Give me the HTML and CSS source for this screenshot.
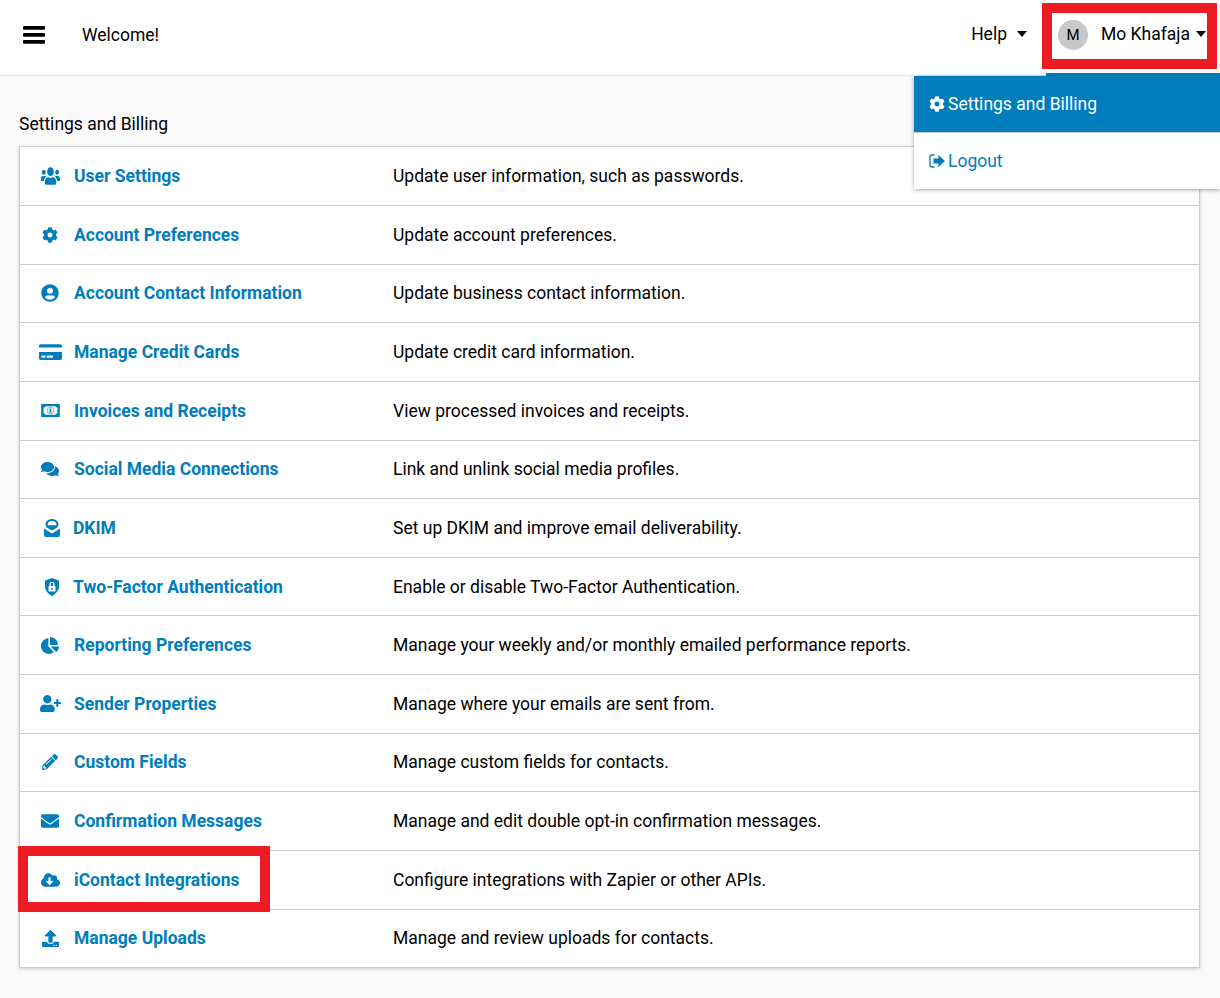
FILE: index.html
```html
<!DOCTYPE html>
<html lang="en">
<head>
    <meta charset="UTF-8">
    <title>Settings and Billing</title>
    <link rel="stylesheet" href="styles.css">
</head>
<body>
    <header class="topbar">
        <svg class="burger" viewBox="0 0 22 18"><rect y="0" width="22" height="3.8" rx="1"/><rect y="7" width="22" height="3.8" rx="1"/><rect y="14" width="22" height="3.8" rx="1"/></svg>
        <span class="welcome">Welcome!</span>
        <div class="help">Help <span class="caret"></span></div>
        <div class="user-menu">
            <span class="avatar">M</span>
            <span class="user-name">Mo Khafaja</span>
            <span class="caret caret-user"></span>
        </div>
    </header>

    <div class="dropdown">
        <a class="dropdown-item active">
            <svg class="drop-icon" viewBox="0 0 512 512"><path d="M487.4 315.7l-42.6-24.6c4.3-23.2 4.3-47 0-70.2l42.6-24.6c4.9-2.8 7.1-8.6 5.5-14-11.1-35.6-30-67.8-54.7-94.6-3.8-4.1-10-5.1-14.8-2.3L380.8 110c-17.9-15.4-38.5-27.3-60.8-35.1V25.8c0-5.6-3.9-10.5-9.4-11.7-36.7-8.2-74.3-7.8-109.2 0-5.5 1.2-9.4 6.1-9.4 11.7V75c-22.2 7.9-42.8 19.8-60.8 35.1L88.7 85.5c-4.9-2.8-11-1.9-14.8 2.3-24.7 26.7-43.6 58.9-54.7 94.6-1.7 5.4.6 11.2 5.5 14L67.3 221c-4.3 23.2-4.3 47 0 70.2l-42.6 24.6c-4.9 2.8-7.1 8.6-5.5 14 11.1 35.6 30 67.8 54.7 94.6 3.8 4.1 10 5.1 14.8 2.3l42.6-24.6c17.9 15.4 38.5 27.3 60.8 35.1v49.2c0 5.6 3.9 10.5 9.4 11.7 36.7 8.2 74.3 7.8 109.2 0 5.5-1.2 9.4-6.1 9.4-11.7v-49.2c22.2-7.9 42.8-19.8 60.8-35.1l42.6 24.6c4.9 2.8 11 1.9 14.8-2.3 24.7-26.7 43.6-58.9 54.7-94.6 1.5-5.5-.7-11.3-5.6-14.1zM256 336c-44.1 0-80-35.9-80-80s35.9-80 80-80 80 35.9 80 80-35.9 80-80 80z"/></svg>
            Settings and Billing
        </a>
        <a class="dropdown-item">
            <svg class="drop-icon" viewBox="0 0 16 14"><path d="M5.5 1H3a2 2 0 0 0-2 2v8a2 2 0 0 0 2 2h2.500" fill="none" stroke="currentColor" stroke-width="1.300"/><path d="M4.500 4.600h4.800V1L16 7l-6.700 6V9.400H4.500z"/></svg>
            Logout
        </a>
    </div>

    <main class="content">
        <h1 class="page-title">Settings and Billing</h1>
        <div class="settings-card">
            <div class="row">
                <svg class="icon users" viewBox="0 0 640 512" preserveAspectRatio="none"><path d="M96 224c35.3 0 64-28.7 64-64s-28.7-64-64-64-64 28.7-64 64 28.7 64 64 64zm448 0c35.3 0 64-28.7 64-64s-28.7-64-64-64-64 28.7-64 64 28.7 64 64 64zm32 32h-64c-17.6 0-33.5 7.1-45.1 18.6 40.3 22.1 68.9 62 75.1 109.4h66c17.7 0 32-14.3 32-32v-32c0-35.3-28.7-64-64-64zm-256 0c61.9 0 112-50.1 112-112S381.9 32 320 32 208 82.1 208 144s50.1 112 112 112zm76.8 32h-8.3c-20.8 10-43.9 16-68.5 16s-47.6-6-68.5-16h-8.3C179.6 288 128 339.6 128 403.2V432c0 26.5 21.5 48 48 48h288c26.5 0 48-21.5 48-48v-28.8c0-63.6-51.600-115.200-115.200-115.200zm-223.700-13.400C161.500 263.100 145.600 256 128 256H64c-35.300 0-64 28.700-64 64v32c0 17.700 14.300 32 32 32h65.900c6.300-47.400 34.900-87.300 75.200-109.400z"/></svg>
                <a class="row-name">User Settings</a>
                <span class="row-desc">Update user information, such as passwords.</span>
            </div>
            <div class="row">
                <svg class="icon gear" viewBox="0 0 512 512"><path d="M487.4 315.7l-42.6-24.6c4.3-23.2 4.3-47 0-70.2l42.6-24.6c4.9-2.8 7.1-8.6 5.5-14-11.1-35.6-30-67.8-54.7-94.6-3.8-4.1-10-5.1-14.8-2.3L380.8 110c-17.9-15.4-38.5-27.3-60.8-35.1V25.8c0-5.6-3.9-10.5-9.4-11.7-36.7-8.2-74.3-7.8-109.2 0-5.5 1.2-9.4 6.1-9.4 11.7V75c-22.2 7.9-42.8 19.8-60.8 35.1L88.7 85.5c-4.9-2.8-11-1.9-14.8 2.3-24.7 26.7-43.6 58.9-54.7 94.6-1.7 5.4.6 11.2 5.5 14L67.3 221c-4.3 23.2-4.3 47 0 70.2l-42.6 24.6c-4.9 2.8-7.1 8.6-5.5 14 11.1 35.6 30 67.8 54.7 94.6 3.8 4.1 10 5.1 14.8 2.3l42.6-24.6c17.9 15.4 38.5 27.3 60.8 35.1v49.2c0 5.6 3.9 10.5 9.4 11.7 36.7 8.2 74.3 7.8 109.2 0 5.5-1.2 9.4-6.1 9.4-11.7v-49.2c22.2-7.9 42.8-19.8 60.8-35.1l42.6 24.6c4.9 2.8 11 1.9 14.8-2.3 24.7-26.7 43.6-58.9 54.7-94.6 1.5-5.5-.7-11.3-5.6-14.1zM256 336c-44.1 0-80-35.9-80-80s35.9-80 80-80 80 35.9 80 80-35.9 80-80 80z"/></svg>
                <a class="row-name">Account Preferences</a>
                <span class="row-desc">Update account preferences.</span>
            </div>
            <div class="row">
                <svg class="icon circle-user" viewBox="0 0 496 512"><path d="M248 8C111 8 0 119 0 256s111 248 248 248 248-111 248-248S385 8 248 8zm0 96c48.600 0 88 39.400 88 88s-39.400 88-88 88-88-39.400-88-88 39.400-88 88-88zm0 344c-58.700 0-111.300-26.600-146.500-68.200 18.800-35.400 55.600-59.800 98.500-59.800 2.400 0 4.800.4 7.100 1.100 13 4.200 26.600 6.900 40.900 6.900 14.300 0 28-2.700 40.900-6.900 2.300-.7 4.700-1.100 7.100-1.100 42.900 0 79.700 24.400 98.500 59.800C359.300 421.400 306.700 448 248 448z"/></svg>
                <a class="row-name">Account Contact Information</a>
                <span class="row-desc">Update business contact information.</span>
            </div>
            <div class="row">
                <svg class="icon card" viewBox="0 0 576 512" preserveAspectRatio="none"><path d="M0 432c0 26.500 21.500 48 48 48h480c26.500 0 48-21.500 48-48V256H0v176zm192-68c0-6.600 5.400-12 12-12h136c6.600 0 12 5.400 12 12v40c0 6.600-5.400 12-12 12H204c-6.600 0-12-5.400-12-12v-40zm-128 0c0-6.600 5.400-12 12-12h72c6.600 0 12 5.400 12 12v40c0 6.600-5.400 12-12 12H76c-6.600 0-12-5.400-12-12v-40zM576 80v48H0V80c0-26.500 21.500-48 48-48h480c26.500 0 48 21.500 48 48z"/></svg>
                <a class="row-name">Manage Credit Cards</a>
                <span class="row-desc">Update credit card information.</span>
            </div>
            <div class="row">
                <svg class="icon money" viewBox="0 0 20 14"><path fill-rule="evenodd" d="M0 0h20v14H0zM2.500 4v6A2.500 2.500 0 0 1 4.500 11.500h11a2.500 2.500 0 0 1 2-1.500V4a2.500 2.500 0 0 1-2-1.500h-11A2.500 2.500 0 0 1 2.500 4z"/><circle cx="10" cy="7" r="4" fill="#7fbedd"/><circle cx="10" cy="7" r="2.900" fill="#fff"/><path d="M9.400 4.800h1.400v3.400h.7v1H8.600v-1h.8V6h-.8v-.7z"/></svg>
                <a class="row-name">Invoices and Receipts</a>
                <span class="row-desc">View processed invoices and receipts.</span>
            </div>
            <div class="row">
                <svg class="icon comments" viewBox="0 0 576 512"><path d="M416 192c0-88.400-93.100-160-208-160S0 103.600 0 192c0 34.300 14.100 65.900 38 92-13.400 30.200-35.500 54.200-35.800 54.500-2.200 2.300-2.800 5.700-1.500 8.700S4.800 352 8 352c36.600 0 66.900-12.300 88.700-25 32.200 15.700 70.300 25 111.300 25 114.900 0 208-71.600 208-160zm122 220c23.900-26 38-57.700 38-92 0-66.900-53.500-124.200-129.300-148.100.9 6.600 1.300 13.300 1.300 20.100 0 105.900-107.700 192-240 192-10.800 0-21.300-.8-31.700-1.900C207.800 439.600 281.800 480 368 480c41 0 79.100-9.200 111.300-25 21.800 12.700 52.100 25 88.700 25 3.200 0 6.100-1.900 7.300-4.800 1.300-2.900.7-6.300-1.500-8.700-.3-.3-22.400-24.200-35.800-54.500z"/></svg>
                <a class="row-name">Social Media Connections</a>
                <span class="row-desc">Link and unlink social media profiles.</span>
            </div>
            <div class="row row-tight">
                <svg class="icon dkim" viewBox="0 0 16 18"><path fill-rule="evenodd" d="M8 0c3.600 0 6.500 2.300 6.500 5.200 0 1.300-.5 2.300-1.300 3.200L8 11.500 2.800 8.400C2 7.500 1.500 6.500 1.500 5.200 1.500 2.300 4.400 0 8 0zM8 2C5.600 2 3.600 3.400 3.600 5.200c0 .4.100.8.300 1.100h8.200c.2-.3.300-.7.300-1.100C12.400 3.400 10.400 2 8 2z"/><path d="M0 9.500l8 5 8-5V16a2 2 0 0 1-2 2H2a2 2 0 0 1-2-2z"/></svg>
                <a class="row-name">DKIM</a>
                <span class="row-desc">Set up DKIM and improve email deliverability.</span>
            </div>
            <div class="row row-tight">
                <svg class="icon shield" viewBox="0 0 14 18"><path fill-rule="evenodd" d="M7 0l6.200 2.200c.5.200.8.600.8 1.100v4.500c0 4.500-3 8.200-7 10.200-4-2-7-5.700-7-10.200V3.300c0-.5.300-.9.800-1.100zM7 3.800a2.500 2.500 0 0 0-2.500 2.500V8H4a.5.5 0 0 0-.5.500v4.500a.5.5 0 0 0 .5.500h6a.5.5 0 0 0 .5-.5V8.500A.5.5 0 0 0 10 8h-.5V6.300A2.500 2.500 0 0 0 7 3.800zm0 1.300c.7 0 1.200.5 1.200 1.200V8H5.800V6.300c0-.7.500-1.200 1.200-1.200z"/><rect x="6.400" y="9.700" width="1.200" height="2.300" rx=".5"/></svg>
                <a class="row-name">Two-Factor Authentication</a>
                <span class="row-desc">Enable or disable Two-Factor Authentication.</span>
            </div>
            <div class="row">
                <svg class="icon pie" viewBox="0 0 544 512"><path d="M527.790 288H290.500l158.030 158.030c6.040 6.040 15.980 6.530 22.190.68 38.700-36.460 65.320-85.610 73.130-140.860 1.340-9.460-6.510-17.850-16.060-17.850zm-15.830-64.800C503.720 103.740 408.260 8.280 288.800.04 279.680-.59 272 7.100 272 16.240V240h223.770c9.140 0 16.820-7.680 16.190-16.800zM224 288V50.710c0-9.550-8.390-17.400-17.840-16.060C86.990 51.490-4.100 155.600.14 280.370 4.500 408.510 114.830 513.590 243.030 511.980c50.400-.63 96.970-16.870 135.260-44.030 7.900-5.600 8.420-17.230 1.570-24.080L224 288z"/></svg>
                <a class="row-name">Reporting Preferences</a>
                <span class="row-desc">Manage your weekly and/or monthly emailed performance reports.</span>
            </div>
            <div class="row">
                <svg class="icon user-plus" viewBox="0 0 640 512"><path d="M624 208h-64v-64c0-8.800-7.200-16-16-16h-32c-8.800 0-16 7.200-16 16v64h-64c-8.800 0-16 7.200-16 16v32c0 8.800 7.200 16 16 16h64v64c0 8.800 7.200 16 16 16h32c8.800 0 16-7.200 16-16v-64h64c8.800 0 16-7.200 16-16v-32c0-8.800-7.200-16-16-16zm-400 48c70.700 0 128-57.300 128-128S294.700 0 224 0 96 57.300 96 128s57.300 128 128 128zm89.600 32h-16.700c-22.200 10.200-46.900 16-72.900 16s-50.600-5.800-72.900-16h-16.700C60.200 288 0 348.200 0 422.400V464c0 26.500 21.500 48 48 48h352c26.500 0 48-21.500 48-48v-41.600c0-74.200-60.200-134.400-134.400-134.400z"/></svg>
                <a class="row-name">Sender Properties</a>
                <span class="row-desc">Manage where your emails are sent from.</span>
            </div>
            <div class="row">
                <svg class="icon pencil" viewBox="0 0 512 512"><path d="M497.900 142.100l-46.100 46.100c-4.700 4.700-12.300 4.700-17 0l-111-111c-4.700-4.700-4.700-12.300 0-17l46.100-46.100c18.700-18.700 49.100-18.700 67.900 0l60.100 60.100c18.800 18.700 18.800 49.100 0 67.900zM284.200 99.800L21.600 362.400.4 483.900c-2.900 16.400 11.400 30.600 27.800 27.800l121.500-21.300 262.600-262.600c4.700-4.700 4.700-12.300 0-17l-111-111c-4.800-4.700-12.400-4.700-17.100 0zM124.100 339.900c-5.500-5.500-5.500-14.300 0-19.800l154-154c5.500-5.500 14.300-5.500 19.800 0s5.500 14.300 0 19.800l-154 154c-5.500 5.500-14.300 5.500-19.800 0zM88 424h48v36.300l-64.500 11.300-31.100-31.100L51.700 376H88v48z"/></svg>
                <a class="row-name">Custom Fields</a>
                <span class="row-desc">Manage custom fields for contacts.</span>
            </div>
            <div class="row">
                <svg class="icon envelope" viewBox="0 0 512 512"><path d="M502.300 190.800c3.900-3.100 9.700-.2 9.700 4.700V400c0 26.500-21.500 48-48 48H48c-26.500 0-48-21.500-48-48V195.600c0-5 5.700-7.800 9.700-4.700 22.400 17.400 52.100 39.500 154.100 113.600 21.100 15.400 56.700 47.800 92.200 47.600 35.700.3 72-32.800 92.300-47.600 102-74.100 131.600-96.300 154-113.700zM256 320c23.200.4 56.600-29.200 73.400-41.400 132.700-96.300 142.800-104.700 173.400-128.700 5.800-4.500 9.200-11.500 9.200-18.900v-19c0-26.500-21.500-48-48-48H48C21.500 64 0 85.500 0 112v19c0 7.400 3.400 14.300 9.200 18.900 30.600 23.900 40.700 32.400 173.400 128.700 16.800 12.200 50.200 41.800 73.400 41.400z"/></svg>
                <a class="row-name">Confirmation Messages</a>
                <span class="row-desc">Manage and edit double opt-in confirmation messages.</span>
            </div>
            <div class="row">
                <svg class="icon cloud" viewBox="0 0 640 512"><path d="M537.600 226.600c4.100-10.700 6.400-22.400 6.400-34.600 0-53-43-96-96-96-19.700 0-38.100 6-53.300 16.200C367 64.200 315.300 32 256 32c-88.400 0-160 71.600-160 160 0 2.700.1 5.400.2 8.100C40.200 219.800 0 273.200 0 336c0 79.500 64.500 144 144 144h368c70.700 0 128-57.300 128-128 0-61.900-44-113.600-102.400-125.400zm-132.900 88.700L299.300 420.700c-6.200 6.200-16.400 6.200-22.600 0L171.300 315.300c-10.100-10.100-2.900-27.300 11.300-27.300H248V176c0-8.800 7.200-16 16-16h48c8.800 0 16 7.200 16 16v112h65.400c14.200 0 21.400 17.200 11.300 27.300z"/></svg>
                <a class="row-name">iContact Integrations</a>
                <span class="row-desc">Configure integrations with Zapier or other APIs.</span>
            </div>
            <div class="row">
                <svg class="icon upload" viewBox="0 0 512 512"><path d="M296 384h-80c-13.300 0-24-10.700-24-24V192h-87.700c-17.800 0-26.700-21.500-14.100-34.100L242.300 5.700c7.500-7.500 19.800-7.500 27.300 0l152.200 152.200c12.600 12.600 3.700 34.100-14.100 34.100H320v168c0 13.300-10.700 24-24 24zm216-8v112c0 13.300-10.700 24-24 24H24c-13.300 0-24-10.700-24-24V376c0-13.300 10.700-24 24-24h136v8c0 30.900 25.100 56 56 56h80c30.900 0 56-25.100 56-56v-8h136c13.300 0 24 10.700 24 24zm-124 88c0-11-9-20-20-20s-20 9-20 20 9 20 20 20 20-9 20-20zm64 0c0-11-9-20-20-20s-20 9-20 20 9 20 20 20 20-9 20-20z"/></svg>
                <a class="row-name">Manage Uploads</a>
                <span class="row-desc">Manage and review uploads for contacts.</span>
            </div>
        </div>
    </main>

    <div class="callout callout-user"></div>
    <div class="callout callout-integrations"></div>
</body>
</html>
```

FILE: styles.css
```css
* {
    box-sizing: border-box;
}

html, body {
    height: 100%;
}

body {
    margin: 0;
    overflow: hidden;
    position: relative;
    background-color: #f9f9f9;
    color: #000;
    font-family: Roboto, "Liberation Sans", sans-serif;
    font-size: 17.5px;
}

.topbar {
    display: flex;
    align-items: center;
    height: 76px;
    padding-left: 23px;
    background-color: #fff;
    border-bottom: 1px solid #e3e3e8;
}

.burger {
    width: 22px;
    height: 18px;
    margin-top: -6px;
    fill: #000;
}

.welcome {
    margin-left: 37px;
    margin-top: -6px;
}

.help {
    display: flex;
    align-items: center;
    margin-left: auto;
    margin-top: -7px;
    margin-right: 19px;
}

.caret {
    display: inline-block;
    width: 0;
    height: 0;
    margin-left: 10px;
    border-left: 5.5px solid transparent;
    border-right: 5.5px solid transparent;
    border-top: 6px solid #000;
}

.caret-user {
    margin-left: 6px;
    margin-top: -4px;
}

.user-menu {
    display: flex;
    align-items: center;
    width: 174px;
    height: 76px;
    padding: 0 0 0 12px;
    border-bottom: 3px solid #007dbb;
}

.avatar {
    display: flex;
    align-items: center;
    justify-content: center;
    width: 30px;
    height: 30px;
    border-radius: 50%;
    background-color: #c8c8c8;
    font-size: 15px;
    margin-top: -3px;
}

.user-name {
    margin-left: 13px;
    margin-top: -5px;
}

.dropdown {
    position: absolute;
    top: 76px;
    right: 0;
    width: 306px;
    height: 113px;
    background-color: #fff;
    box-shadow: 0 1px 4px rgba(0, 0, 0, 0.35);
}

.dropdown-item {
    display: flex;
    align-items: center;
    gap: 3px;
    height: 56.5px;
    padding-left: 15px;
    color: #007dbb;
}

.dropdown-item.active {
    height: 57px;
    background-color: #007dbb;
    border-bottom: 1px solid #ccc;
    color: #fff;
}

.drop-icon {
    width: 16px;
    height: 16px;
    fill: currentColor;
}

.content {
    padding: 37px 20px 0 19px;
}

.page-title {
    margin: 0 0 11.4px;
    font-size: 17.5px;
    font-weight: 400;
    line-height: 22px;
}

.settings-card {
    width: 1181px;
    background-color: #fff;
    border: 1px solid #ccc;
    box-shadow: 0 1px 3px rgba(0, 0, 0, 0.2);
}

.row {
    display: grid;
    grid-template-columns: 24px 307px 1fr;
    column-gap: 12px;
    align-items: center;
    height: 58.63px;
    padding-left: 18px;
    border-bottom: 1px solid #ccc;
}

.row:last-child {
    height: 57.6px;
    border-bottom: none;
}

.row-tight .row-name {
    margin-left: -1px;
}

.row-tight .icon {
    margin-left: 3px;
}

.icon {
    justify-self: center;
    fill: #007dbb;
}

.users { width: 19px; height: 20px; }
.gear { width: 16px; height: 16px; }
.circle-user { width: 18px; height: 18px; }
.card { width: 23px; height: 18px; }
.money { width: 19px; height: 13px; }
.comments { width: 18px; height: 16px; }
.dkim { width: 16px; height: 18px; }
.shield { width: 14px; height: 18px; }
.pie { width: 18px; height: 17px; }
.user-plus { width: 21px; height: 17px; }
.pencil { width: 16px; height: 16px; }
.envelope { width: 18px; height: 18px; }
.cloud { width: 19px; height: 16px; }
.upload { width: 17px; height: 17px; }

.row-name {
    color: #007dbb;
    font-weight: 700;
}

/* red annotation boxes drawn over the screenshot */
.callout {
    position: absolute;
    border: 10px solid #ed1c24;
}

.callout-user {
    top: 3px;
    left: 1042px;
    width: 175px;
    height: 66px;
}

.callout-integrations {
    top: 846px;
    left: 18px;
    width: 252px;
    height: 66px;
}
```
